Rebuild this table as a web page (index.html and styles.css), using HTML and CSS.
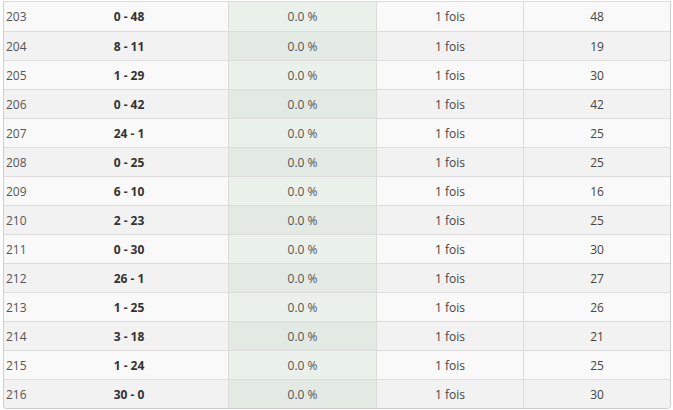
FILE: index.html
```html
<!DOCTYPE html>
<html lang="fr">
<head>
<meta charset="utf-8">
<title>Scores</title>
<link rel="stylesheet" href="styles.css">
</head>
<body>
<div class="table">
  <div class="row"><div class="c rank">203</div><div class="c score">0 - 48</div><div class="c pct">0.0 %</div><div class="c times">1 fois</div><div class="c total">48</div></div>
  <div class="row"><div class="c rank">204</div><div class="c score">8 - 11</div><div class="c pct">0.0 %</div><div class="c times">1 fois</div><div class="c total">19</div></div>
  <div class="row"><div class="c rank">205</div><div class="c score">1 - 29</div><div class="c pct">0.0 %</div><div class="c times">1 fois</div><div class="c total">30</div></div>
  <div class="row"><div class="c rank">206</div><div class="c score">0 - 42</div><div class="c pct">0.0 %</div><div class="c times">1 fois</div><div class="c total">42</div></div>
  <div class="row"><div class="c rank">207</div><div class="c score">24 - 1</div><div class="c pct">0.0 %</div><div class="c times">1 fois</div><div class="c total">25</div></div>
  <div class="row"><div class="c rank">208</div><div class="c score">0 - 25</div><div class="c pct">0.0 %</div><div class="c times">1 fois</div><div class="c total">25</div></div>
  <div class="row"><div class="c rank">209</div><div class="c score">6 - 10</div><div class="c pct">0.0 %</div><div class="c times">1 fois</div><div class="c total">16</div></div>
  <div class="row"><div class="c rank">210</div><div class="c score">2 - 23</div><div class="c pct">0.0 %</div><div class="c times">1 fois</div><div class="c total">25</div></div>
  <div class="row"><div class="c rank">211</div><div class="c score">0 - 30</div><div class="c pct">0.0 %</div><div class="c times">1 fois</div><div class="c total">30</div></div>
  <div class="row"><div class="c rank">212</div><div class="c score">26 - 1</div><div class="c pct">0.0 %</div><div class="c times">1 fois</div><div class="c total">27</div></div>
  <div class="row"><div class="c rank">213</div><div class="c score">1 - 25</div><div class="c pct">0.0 %</div><div class="c times">1 fois</div><div class="c total">26</div></div>
  <div class="row"><div class="c rank">214</div><div class="c score">3 - 18</div><div class="c pct">0.0 %</div><div class="c times">1 fois</div><div class="c total">21</div></div>
  <div class="row"><div class="c rank">215</div><div class="c score">1 - 24</div><div class="c pct">0.0 %</div><div class="c times">1 fois</div><div class="c total">25</div></div>
  <div class="row"><div class="c rank">216</div><div class="c score">30 - 0</div><div class="c pct">0.0 %</div><div class="c times">1 fois</div><div class="c total">30</div></div>
</div>
</body>
</html>
```
FILE: styles.css
```css
html, body {
  margin: 0;
  padding: 0;
  background: #ffffff;
}
body {
  padding-top: 1px;
  font-family: "Open Sans", "Liberation Sans", sans-serif;
  font-size: 12px;
  color: #555;
}
.table {
  box-sizing: border-box;
  margin-left: 3px;
  width: 668px;
  border: 1px solid #cfcfcf;
  border-top: 1px solid #dcdcdc;
  border-radius: 0 0 4px 4px;
  box-shadow: 0 1px 1px rgba(0, 0, 0, 0.06);
  overflow: hidden;
}
.row {
  display: grid;
  grid-template-columns: 26px 198px 148px 147px 147px;
  height: 29px;
  border-bottom: 1px solid #dcdcdc;
  box-sizing: border-box;
  background: #f9f9f9;
}
.row:first-child {
  height: 30px;
}
.row:nth-child(even) {
  background: #f2f2f2;
}
.row:last-child {
  border-bottom: none;
  height: 28px;
}
.c {
  display: flex;
  align-items: center;
  justify-content: center;
  white-space: nowrap;
}
.rank {
  justify-content: flex-start;
  padding-left: 2px;
  color: #555;
}
.score {
  font-weight: 700;
  color: #333;
}
.pct {
  border-left: 1px solid #dcdcdc;
  background: #eaf0ea;
  color: #555;
}
.row:nth-child(even) .pct {
  background: #e3e9e3;
}
.times {
  border-left: 1px solid #dcdcdc;
  color: #444;
}
.total {
  border-left: 1px solid #dcdcdc;
  color: #444;
}
```
